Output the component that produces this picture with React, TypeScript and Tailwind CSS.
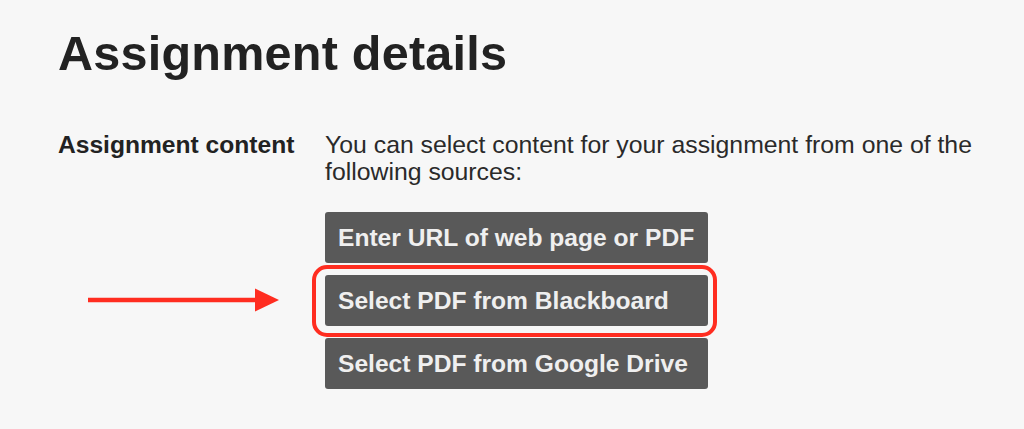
export default function App() {
  const font = { fontFamily: '"Liberation Sans", Arial, Helvetica, sans-serif' };

  return (
    <div className="min-h-[429px] w-full bg-[#f7f7f7] text-[#222]" style={font}>
      <div className="pl-[58px] pt-[29px]">
        <h1 className="text-[48.5px] font-bold leading-[48px] tracking-[0.25px] text-[#222]">Assignment details</h1>

        <div className="mt-[54px] flex">
          <div className="w-[267px] shrink-0 text-[24.6px] font-bold leading-[27px] text-[#222]">
            Assignment content
          </div>
          <div className="w-[680px]">
            <p className="text-[24.8px] leading-[27px] text-[#2a2a2a]">
              You can select content for your assignment from one of the following sources:
            </p>

            <div className="mt-[27px] flex w-[383px] flex-col gap-[12px]">
              <button className="h-[51px] rounded-[3px] bg-[#595959] px-[13px] text-left text-[24.6px] font-bold leading-[28px] text-[#efefef]">
                Enter URL of web page or PDF
              </button>

              <div className="relative">
                <button className="h-[51px] w-full rounded-[3px] bg-[#595959] px-[13px] text-left text-[24.6px] font-bold leading-[28px] text-[#efefef]">
                  Select PDF from Blackboard
                </button>
                {/* annotation: highlight ring */}
                <div className="pointer-events-none absolute -top-[10px] -bottom-[11px] -left-[13px] -right-[9px] rounded-[15px] border-[4px] border-[#ff2d20]" />
                {/* annotation: arrow */}
                <svg
                  className="pointer-events-none absolute -left-[237px] top-[13px]"
                  width="192"
                  height="24"
                  viewBox="0 0 192 24"
                >
                  <line x1="0" y1="12" x2="170" y2="12" stroke="#ff2d20" strokeWidth="4.5" />
                  <polygon points="167,0.5 191,12 167,23.5" fill="#ff2d20" />
                </svg>
              </div>

              <button className="h-[51px] rounded-[3px] bg-[#595959] px-[13px] text-left text-[24.6px] font-bold leading-[28px] text-[#efefef]">
                Select PDF from Google Drive
              </button>
            </div>
          </div>
        </div>
      </div>
    </div>
  );
}
